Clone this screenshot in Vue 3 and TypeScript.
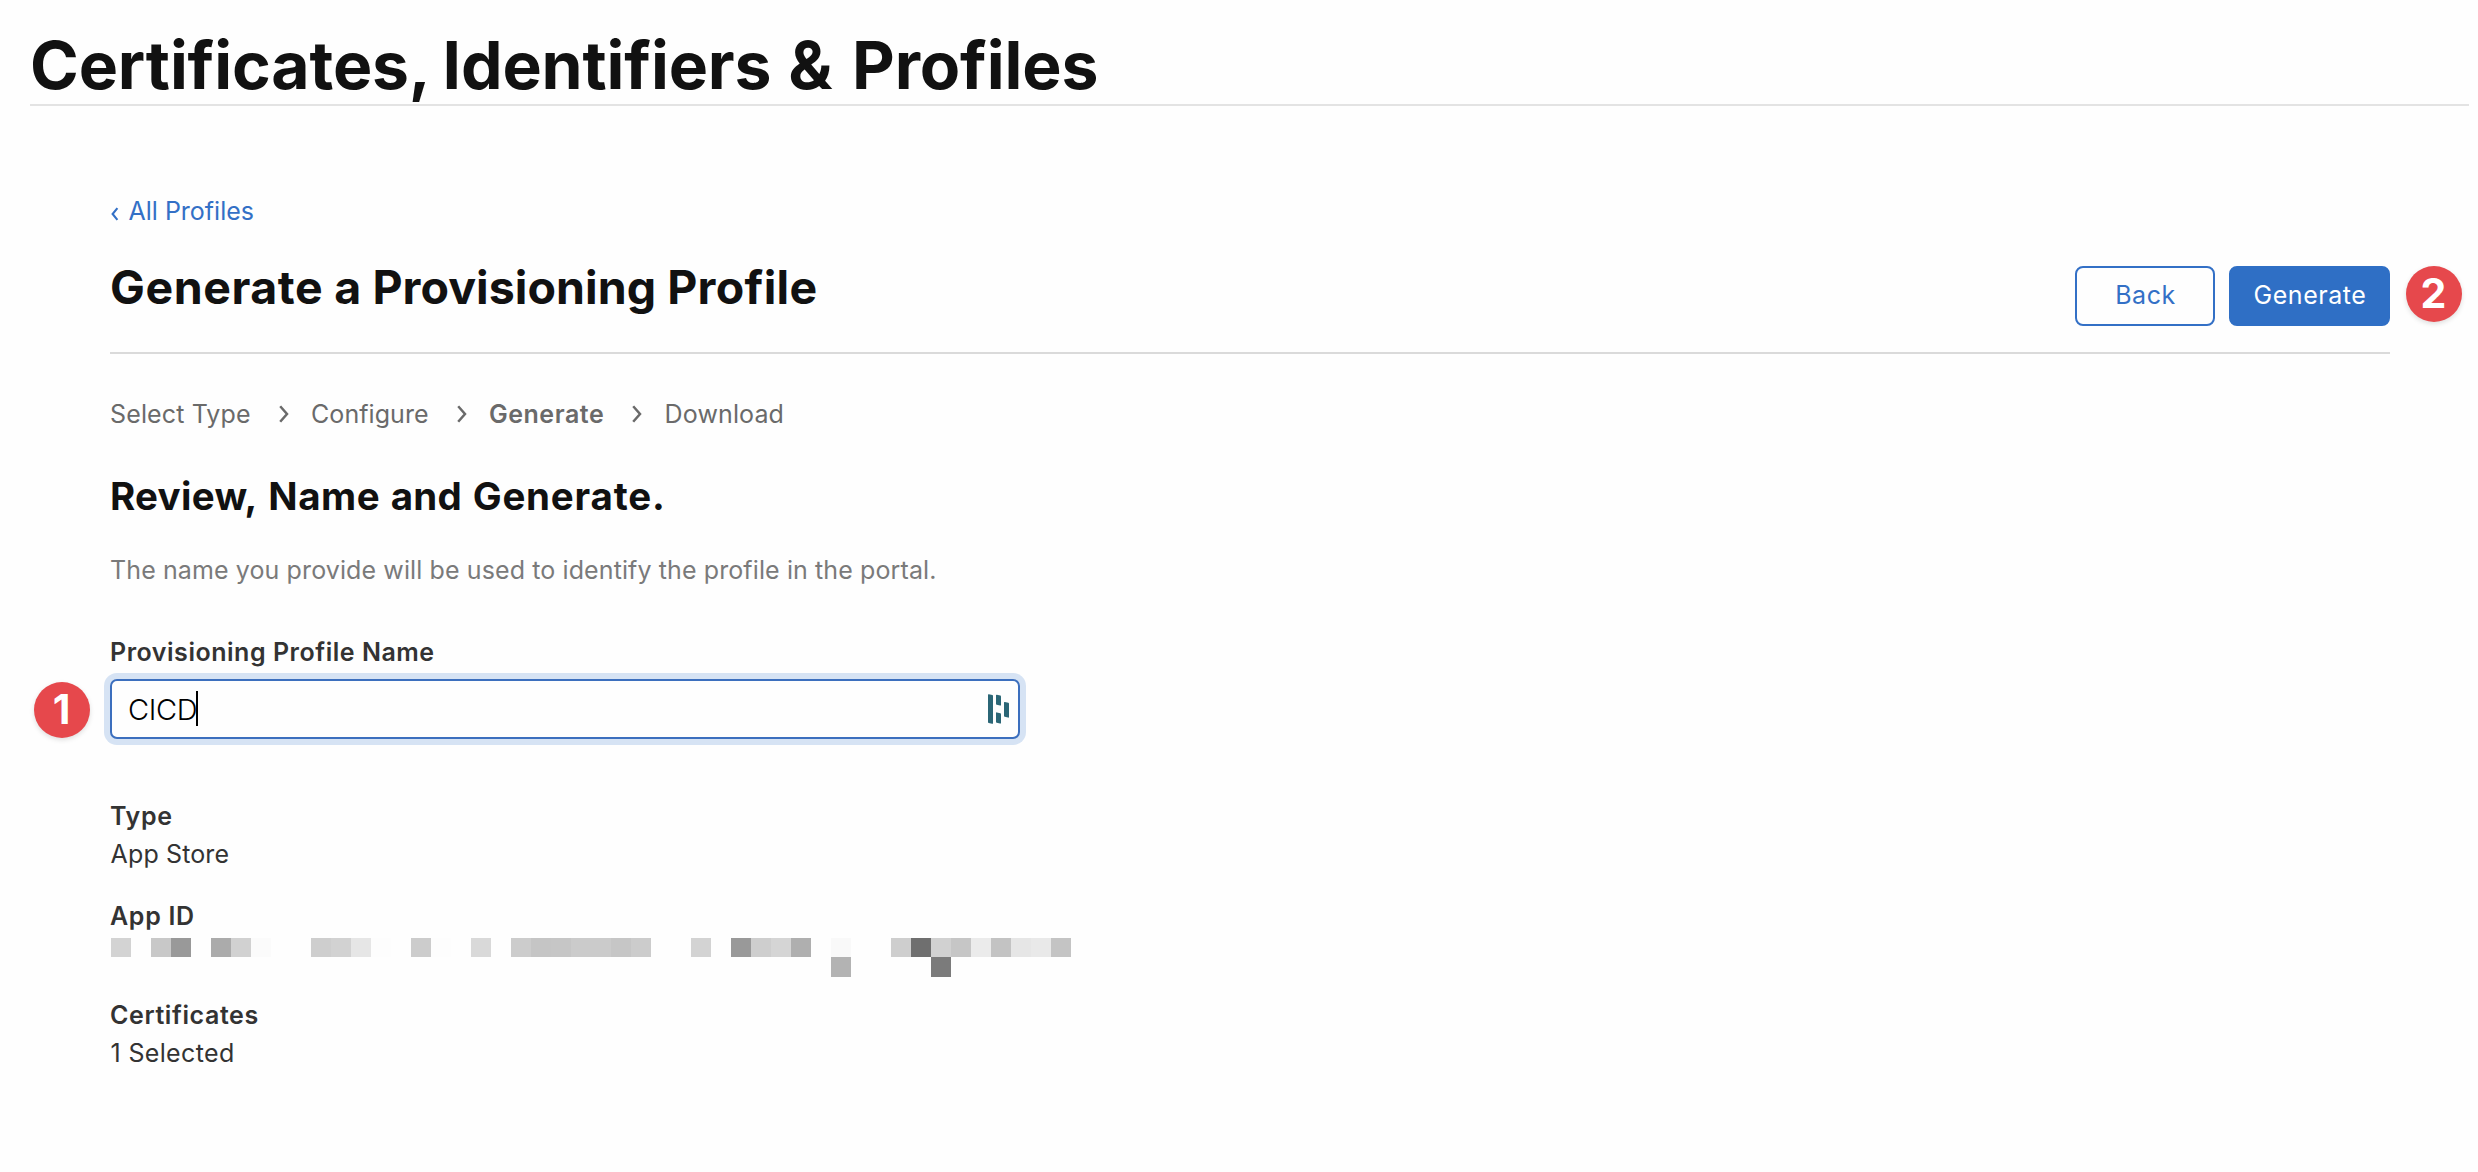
<script setup lang="ts">
import { ref } from 'vue'

interface Step {
  label: string
  spacing: number
  current?: boolean
}

const steps: Step[] = [
  { label: 'Select Type', spacing: 0.13 },
  { label: 'Configure', spacing: 0.07 },
  { label: 'Generate', spacing: 0.54, current: true },
  { label: 'Download', spacing: 0.13 },
]

const profileName = ref('CICD')

// Redacted App ID: [column, shade] cells, two rows of 20px columns
const redactedTop: [number, string][] = [
  [0, '#d3d3d3'], [2, '#c8c8c8'], [3, '#999999'], [5, '#ababab'], [6, '#d1d1d1'], [7, '#fbfbfb'],
  [10, '#cecece'], [11, '#d2d2d2'], [12, '#e6e6e6'], [13, '#fdfdfd'], [15, '#cccccc'], [16, '#fdfdfd'],
  [18, '#d9d9d9'], [20, '#cccccc'], [21, '#c5c5c5'], [22, '#c6c6c6'], [23, '#cbcbcb'], [24, '#cbcbcb'],
  [25, '#c6c6c6'], [26, '#cccccc'], [29, '#d3d3d3'], [31, '#999999'], [32, '#cecece'], [33, '#d5d5d5'],
  [34, '#afafaf'], [36, '#f9f9f9'], [39, '#cecece'], [40, '#6f6f6f'], [41, '#d1d1d1'], [42, '#c6c6c6'],
  [43, '#ebebeb'], [44, '#c3c3c3'], [45, '#e6e6e6'], [46, '#e9e9e9'], [47, '#c4c4c4'],
]
const redactedBottom: [number, string][] = [[36, '#b3b3b3'], [41, '#7b7b7b']]
</script>

<template>
  <div class="page">
    <header class="site-header">
      <h1><span class="lead">Certificates,</span> Identifiers <span class="amp">&amp;</span> Profiles</h1>
    </header>

    <main class="content">
      <a class="back-link">
        <svg width="10" height="16" viewBox="0 0 10 16">
          <path d="M7.4 2.2 2.6 8l4.8 5.8" fill="none" stroke="currentColor" stroke-width="2.1" />
        </svg>
        <span>All Profiles</span>
      </a>

      <div class="heading">
        <h2><span class="loose">Generate</span> a Provisioning <span class="mid">Profile</span></h2>
        <div class="actions">
          <button class="btn">Back</button>
          <button class="btn primary">Generate</button>
          <span class="badge badge-two">2</span>
        </div>
      </div>

      <nav class="steps">
        <template v-for="(step, i) in steps" :key="step.label">
          <span
            class="step"
            :class="{ current: step.current }"
            :style="{ letterSpacing: step.spacing + 'px' }"
          >{{ step.label }}</span>
          <svg v-if="i < steps.length - 1" class="chevron" width="10" height="20" viewBox="0 0 10 20">
            <path d="M1.2 2.2 8 10l-6.8 7.8" fill="none" stroke="currentColor" stroke-width="2.5" />
          </svg>
        </template>
      </nav>

      <h3><span class="mid">Review,</span> <span class="loose">Name</span> <span class="mid">and</span> <span class="looser">Generate.</span></h3>
      <p class="hint">The name you provide will be used to identify the profile in the portal.</p>

      <div class="label field-label">Provisioning Profile Name</div>
      <div class="field">
        <span class="value">{{ profileName }}</span><span class="caret"></span>
        <svg class="manager" width="22" height="30" viewBox="0 0 22 30" fill="#2b6676">
          <path d="M0 .8Q0 0 .9 .2L4.3 1Q5 1.2 5 2v27.2q0 .8-.9 .6L.7 29Q0 28.800 0 28z" />
          <path d="M8 1.300q0-.8.9-.6l3.400.8q.7.200.7 1v8.400q0 .8-.9.600l-3.400-.8Q8 10.500 8 9.700z" />
          <path d="M8 19q0-.8.9-.6l3.400.8q.7.200.7 1v8.700q0 .8-.9.600l-3.400-.8Q8 28.500 8 27.700z" />
          <path d="M16 8.600q0-.8.9-.6l3.400.8q.7.200.7 1v13.200q0 .8-.9.600l-3.400-.8q-.7-.2-.7-1z" />
        </svg>
        <span class="badge badge-one">1</span>
      </div>

      <dl>
        <dt class="label type">Type</dt>
        <dd class="app-store">App Store</dd>
        <dt class="label app-id">App ID</dt>
        <dd class="redacted">
          <i
            v-for="[col, shade] in redactedTop"
            :key="'t' + col"
            :style="{ gridColumn: col + 1, gridRow: 1, background: shade }"
          ></i>
          <i
            v-for="[col, shade] in redactedBottom"
            :key="'b' + col"
            :style="{ gridColumn: col + 1, gridRow: 2, background: shade }"
          ></i>
        </dd>
        <dt class="label certs">Certificates</dt>
        <dd class="selected">1 Selected</dd>
      </dl>
    </main>
  </div>
</template>

<style>
body {
  background: #fefefe;
}
</style>

<style scoped>
.page {
  box-sizing: border-box;
  height: 1172px;
  padding: 26px 9px 0 30px;
  background: #fefefe;
  color: #333;
  font: 400 25px/30px Inter, 'Liberation Sans', sans-serif;
  overflow: hidden;
}

h1, h2, h3, p, dl, dt, dd {
  margin: 0;
}

h1, h2, h3 {
  color: #111;
  font-weight: 700;
  white-space: nowrap;
}

.site-header {
  border-bottom: 2px solid #e3e3e3;
}

h1 {
  font-size: 66px;
  line-height: 78px;
  letter-spacing: -0.15px;
}

.lead {
  margin-right: -3.7px;
}

.amp {
  margin: 0 4px 0 1.5px;
}

.content {
  width: 2280px;
  margin-left: 80px;
  padding-top: 90px;
}

.back-link {
  display: flex;
  align-items: center;
  gap: 8.5px;
  color: #3370c6;
}

.back-link svg {
  margin-top: 5px;
}

.heading {
  display: flex;
  justify-content: space-between;
  align-items: flex-start;
  margin-top: 40px;
  padding-bottom: 26px;
  border-bottom: 2px solid #dadada;
}

h2 {
  font-size: 46.5px;
  line-height: 42px;
  letter-spacing: 0.05px;
}

.mid {
  letter-spacing: 0.28px;
}

.loose {
  letter-spacing: 0.55px;
}

.looser {
  letter-spacing: 0.79px;
}

.actions {
  position: relative;
  display: flex;
  gap: 14px;
}

.btn {
  box-sizing: border-box;
  width: 140px;
  height: 60px;
  padding: 0 0 2px 1px;
  border: 2px solid #3370c6;
  border-radius: 8px;
  background: #fefefe;
  color: #3370c6;
  font: 400 25px/30px Inter, sans-serif;
  letter-spacing: 0.54px;
}

.btn.primary {
  width: 161px;
  border-color: #2f6fc5;
  background: #2f6fc5;
  color: #fff;
}

.badge {
  position: absolute;
  width: 56px;
  height: 56px;
  border-radius: 50%;
  background: #e6484c;
  box-shadow: 0 2px 5px rgba(0, 0, 0, 0.13);
  color: #fff;
  font-size: 41px;
  font-weight: 700;
  line-height: 54px;
  text-align: center;
}

.badge-two {
  left: 330.5px;
  top: 0;
}

.badge-one {
  left: -78.5px;
  top: 1px;
}

.steps {
  display: flex;
  align-items: center;
  margin-top: 45px;
  color: #6a6a6a;
}

.step.current {
  font-weight: 600;
}

.chevron {
  margin: 0 22.3px 0 28px;
}

h3 {
  margin-top: 43px;
  font-size: 38.5px;
  line-height: 48px;
  word-spacing: 1.4px;
}

.hint {
  margin-top: 35px;
  color: #7a7a7a;
  letter-spacing: 0.109px;
}

.label {
  color: #333;
  font-weight: 600;
}

.field-label {
  margin-top: 52px;
  letter-spacing: 0.53px;
}

.field {
  position: relative;
  box-sizing: border-box;
  display: flex;
  align-items: center;
  width: 910px;
  height: 60px;
  margin-top: 12px;
  padding: 0 8px 0 16px;
  border: 2px solid #3c6fbe;
  border-radius: 7px;
  background: #fefefe;
  box-shadow: 0 0 0 6px #d6e3f4;
  color: #000;
}

.value {
  padding-top: 2px;
  font-size: 29px;
  font-weight: 300;
  letter-spacing: -0.377px;
}

.caret {
  width: 2px;
  height: 35px;
  margin: 0 0 1px -1px;
  background: #000;
}

.manager {
  margin-left: auto;
}

dl {
  padding-top: 62px;
}

.type,
.app-id {
  letter-spacing: 0.68px;
}

.app-store {
  margin: 8px 0 0 0.6px;
  letter-spacing: 0.12px;
}

.app-id {
  margin-top: 32px;
}

.redacted {
  display: grid;
  grid-template-columns: repeat(48, 20px);
  grid-template-rows: 19px 20px;
  margin: 7px 0 0 1px;
}

.certs {
  margin-top: 23px;
  letter-spacing: 0.602px;
}

.selected {
  margin: 8px 0 0 0.5px;
  letter-spacing: 0.35px;
}
</style>
